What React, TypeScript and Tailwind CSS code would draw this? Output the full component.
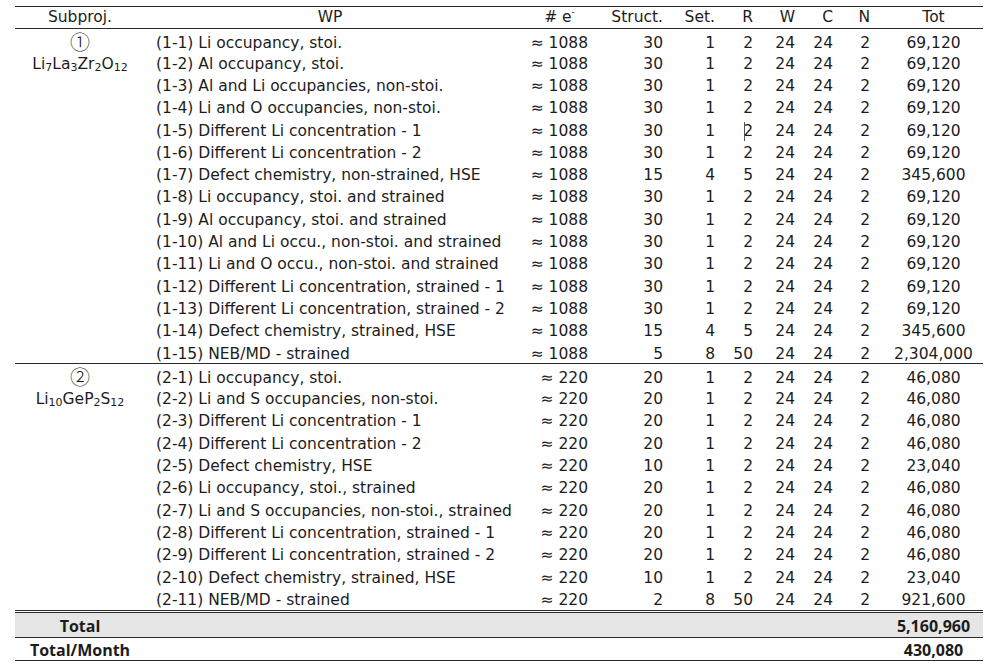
import React from "react";

type Row = {
  wp: string;
  e: string;
  s: string;
  set: string;
  r: string;
  w: string;
  c: string;
  n: string;
  tot: string;
  cursor?: boolean;
};

const std1 = { e: "1088", s: "30", set: "1", r: "2", w: "24", c: "24", n: "2", tot: "69,120" };
const std2 = { e: "220", s: "20", set: "1", r: "2", w: "24", c: "24", n: "2", tot: "46,080" };

const sec1: Row[] = [
  { wp: "(1-1) Li occupancy, stoi.", ...std1 },
  { wp: "(1-2) Al occupancy, stoi.", ...std1 },
  { wp: "(1-3) Al and Li occupancies, non-stoi.", ...std1 },
  { wp: "(1-4) Li and O occupancies, non-stoi.", ...std1 },
  { wp: "(1-5) Different Li concentration - 1", ...std1, cursor: true },
  { wp: "(1-6) Different Li concentration - 2", ...std1 },
  { wp: "(1-7) Defect chemistry, non-strained, HSE", ...std1, s: "15", set: "4", r: "5", tot: "345,600" },
  { wp: "(1-8) Li occupancy, stoi. and strained", ...std1 },
  { wp: "(1-9) Al occupancy, stoi. and strained", ...std1 },
  { wp: "(1-10) Al and Li occu., non-stoi. and strained", ...std1 },
  { wp: "(1-11) Li and O occu., non-stoi. and strained", ...std1 },
  { wp: "(1-12) Different Li concentration, strained - 1", ...std1 },
  { wp: "(1-13) Different Li concentration, strained - 2", ...std1 },
  { wp: "(1-14) Defect chemistry, strained, HSE", ...std1, s: "15", set: "4", r: "5", tot: "345,600" },
  { wp: "(1-15) NEB/MD - strained", ...std1, s: "5", set: "8", r: "50", tot: "2,304,000" },
];

const sec2: Row[] = [
  { wp: "(2-1) Li occupancy, stoi.", ...std2 },
  { wp: "(2-2) Li and S occupancies, non-stoi.", ...std2 },
  { wp: "(2-3) Different Li concentration - 1", ...std2 },
  { wp: "(2-4) Different Li concentration - 2", ...std2 },
  { wp: "(2-5) Defect chemistry, HSE", ...std2, s: "10", tot: "23,040" },
  { wp: "(2-6) Li occupancy, stoi., strained", ...std2 },
  { wp: "(2-7) Li and S occupancies, non-stoi., strained", ...std2 },
  { wp: "(2-8) Different Li concentration, strained - 1", ...std2 },
  { wp: "(2-9) Different Li concentration, strained - 2", ...std2 },
  { wp: "(2-10) Defect chemistry, strained, HSE", ...std2, s: "10", tot: "23,040" },
  { wp: "(2-11) NEB/MD - strained", ...std2, s: "2", set: "8", r: "50", tot: "921,600" },
];

const grid =
  "grid grid-cols-[130px_372px_83px_75px_52px_38px_42px_38px_37px_101px] items-center";

const subCls = "text-[11px] relative top-[2px] align-baseline";

function Formula1() {
  return (
    <span>
      Li<sub className={subCls}>7</sub>La<sub className={subCls}>3</sub>Zr
      <sub className={subCls}>2</sub>O<sub className={subCls}>12</sub>
    </span>
  );
}

function Formula2() {
  return (
    <span>
      Li<sub className={subCls}>10</sub>GeP<sub className={subCls}>2</sub>S
      <sub className={subCls}>12</sub>
    </span>
  );
}

function DataRow({ row, first }: { row: Row; first: React.ReactNode }) {
  return (
    <div className={`${grid} h-[22.3px] pt-[4px]`}>
      <div className="text-center whitespace-nowrap">{first}</div>
      <div className="pl-[11px] whitespace-nowrap">{row.wp}</div>
      <div className="text-right pr-[12px] whitespace-nowrap">≈ {row.e}</div>
      <div className="text-right pr-[12px]">{row.s}</div>
      <div className="text-right pr-[12px]">{row.set}</div>
      <div className="text-right pr-[12px] relative">
        {row.cursor && (
          <span className="absolute left-[17px] top-[-2px] h-[19px] w-px bg-[#555]" />
        )}
        {row.r}
      </div>
      <div className="text-right pr-[12px]">{row.w}</div>
      <div className="text-right pr-[12px]">{row.c}</div>
      <div className="text-right pr-[12px]">{row.n}</div>
      <div className="text-center pl-[2px]">{row.tot}</div>
    </div>
  );
}

export default function App() {
  return (
    <div
      className="w-[1000px] h-[666px] bg-white text-[#1c1c1c] pt-[6px] pl-[15px]"
      style={{ fontFamily: '"DejaVu Sans", "Noto Sans CJK JP", sans-serif' }}
    >
      <div className="w-[968px] text-[15.5px] leading-none">
        <div className={`${grid} h-[23px] border-t border-b border-[#2a2a2a]`}>
          <div className="text-center">Subproj.</div>
          <div className="text-center pr-[2px]">WP</div>
          <div className="text-center pl-[2px]">
            # e<sup className="text-[9px] relative -top-[7px]">-</sup>
          </div>
          <div className="text-right pr-[12px]">Struct.</div>
          <div className="text-right pr-[12px]">Set.</div>
          <div className="text-right pr-[12px]">R</div>
          <div className="text-right pr-[12px]">W</div>
          <div className="text-right pr-[12px]">C</div>
          <div className="text-right pr-[12px]">N</div>
          <div className="text-center pl-[2px]">Tot</div>
        </div>

        <div className="border-b border-[#2a2a2a]">
          {sec1.map((r, i) => (
            <DataRow
              key={r.wp}
              row={r}
              first={
                i === 0 ? (
                  <span className="text-[20px] leading-none font-light">①</span>
                ) : i === 1 ? (
                  <Formula1 />
                ) : null
              }
            />
          ))}
        </div>

        <div>
          {sec2.map((r, i) => (
            <DataRow
              key={r.wp}
              row={r}
              first={
                i === 0 ? (
                  <span className="text-[20px] leading-none font-light">②</span>
                ) : i === 1 ? (
                  <Formula2 />
                ) : null
              }
            />
          ))}
        </div>

        <div className="border-t border-[#2a2a2a] h-[2px]" />
        <div
          className="border-t border-b border-[#2a2a2a] bg-[#e6e6e6] h-[26px] pt-[2px] flex items-center justify-between font-bold text-[16px]"
          style={{ fontFamily: '"Open Sans", sans-serif' }}
        >
          <div className="w-[130px] text-center">Total</div>
          <div className="w-[101px] text-center pl-[2px]">5,160,960</div>
        </div>
        <div
          className="border-b border-[#2a2a2a] h-[23px] pt-[2px] flex items-center justify-between font-bold text-[16px]"
          style={{ fontFamily: '"Open Sans", sans-serif' }}
        >
          <div className="w-[130px] text-center">Total/Month</div>
          <div className="w-[101px] text-center pl-[2px]">430,080</div>
        </div>
      </div>
    </div>
  );
}
